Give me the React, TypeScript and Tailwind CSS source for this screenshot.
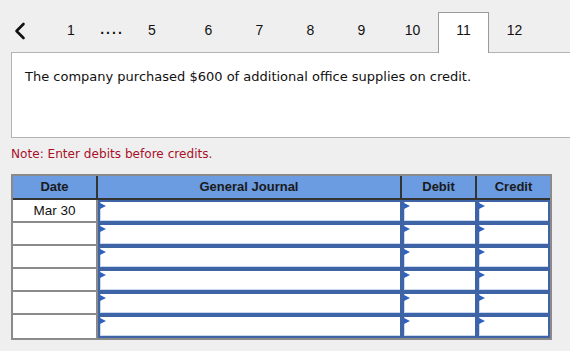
import React from 'react';

const tabs = [
  { label: '1', w: 'w-[46px]' },
  { label: '....', w: 'w-[36px]', dots: true },
  { label: '5', w: 'w-[44px]' },
  { label: '', w: 'w-[9px]', spacer: true },
  { label: '6', w: 'w-[51px]' },
  { label: '7', w: 'w-[51px]' },
  { label: '8', w: 'w-[51px]' },
  { label: '9', w: 'w-[51px]' },
  { label: '10', w: 'w-[51px]' },
  { label: '11', w: 'w-[51px]', active: true },
  { label: '12', w: 'w-[51px]' },
];

function InputCell() {
  return (
    <div className="relative bg-white border-2 border-[#3f64a6] shadow-[inset_0_-1px_0_#c9d8f0,inset_1px_0_0_#c9d8f0]">
      <span className="absolute left-0 top-[1px] w-0 h-0 border-y-[3px] border-y-transparent border-l-[6px] border-l-[#2f62c0]" />
    </div>
  );
}

export default function App() {
  const rows = ['Mar 30', '', '', '', '', ''];
  return (
    <div className="w-[570px] h-[351px] overflow-hidden bg-[#efefef] font-['Liberation_Sans',Arial,sans-serif]">
      {/* Tab strip */}
      <div className="flex items-end h-[52px]">
        <div className="w-[48px] h-[40px] flex items-center pl-[13px] pb-[3px]">
          <svg width="14" height="18" viewBox="0 0 14 18">
            <path d="M10.5 2 L3.5 9 L10.5 16" fill="none" stroke="#111" strokeWidth="2.6" strokeLinecap="round" strokeLinejoin="round" />
          </svg>
        </div>
        {tabs.map((t, i) => (
          <div
            key={i}
            className={
              t.active
                ? `${t.w} h-[41px] -mb-px relative z-10 bg-white border border-b-0 border-[#9a9a9a] flex items-center justify-center pb-[5px] text-[14px] text-[#111]`
                : `${t.w} h-[40px] flex items-center justify-center pb-[3px] text-[14px] text-[#111]`
            }
          >
            {t.dots ? <span className="font-bold tracking-[2px] -mt-[2px]">....</span> : t.label}
          </div>
        ))}
      </div>

      {/* Question box */}
      <div className="ml-[11px] h-[86px] bg-white border border-r-0 border-[#b3b3b3] pl-[13px] pt-[14px]">
        <p className="font-['DejaVu_Sans',Verdana,sans-serif] text-[13px] text-[#111]">
          The company purchased $600 of additional office supplies on credit.
        </p>
      </div>

      <p className="ml-[11px] mt-[7px] font-['DejaVu_Sans',Verdana,sans-serif] text-[12.1px] text-[#a8102a]">
        Note: Enter debits before credits.
      </p>

      {/* Journal table */}
      <div className="ml-[11px] mt-[11px] w-[541px] border-2 border-[#8a8a8a] grid grid-cols-[85px_304px_75px_73px]">
        {['Date', 'General Journal', 'Debit', 'Credit'].map((h, i) => (
          <div
            key={h}
            className={`h-[24px] bg-[#6b9be0] border-b-2 border-[#333] flex items-center justify-center text-[13px] font-bold text-[#1a1a1a] ${i < 3 ? 'border-r-2' : ''}`}
          >
            {h}
          </div>
        ))}
        {rows.map((d, r) => (
          <React.Fragment key={r}>
            <div className={`h-[23px] bg-white border-r-2 border-[#8a8a8a] flex items-center justify-center text-[13.5px] text-[#111] ${r < 5 ? 'border-b-2' : ''}`}>
              {d}
            </div>
            <InputCell />
            <InputCell />
            <InputCell />
          </React.Fragment>
        ))}
      </div>
    </div>
  );
}
